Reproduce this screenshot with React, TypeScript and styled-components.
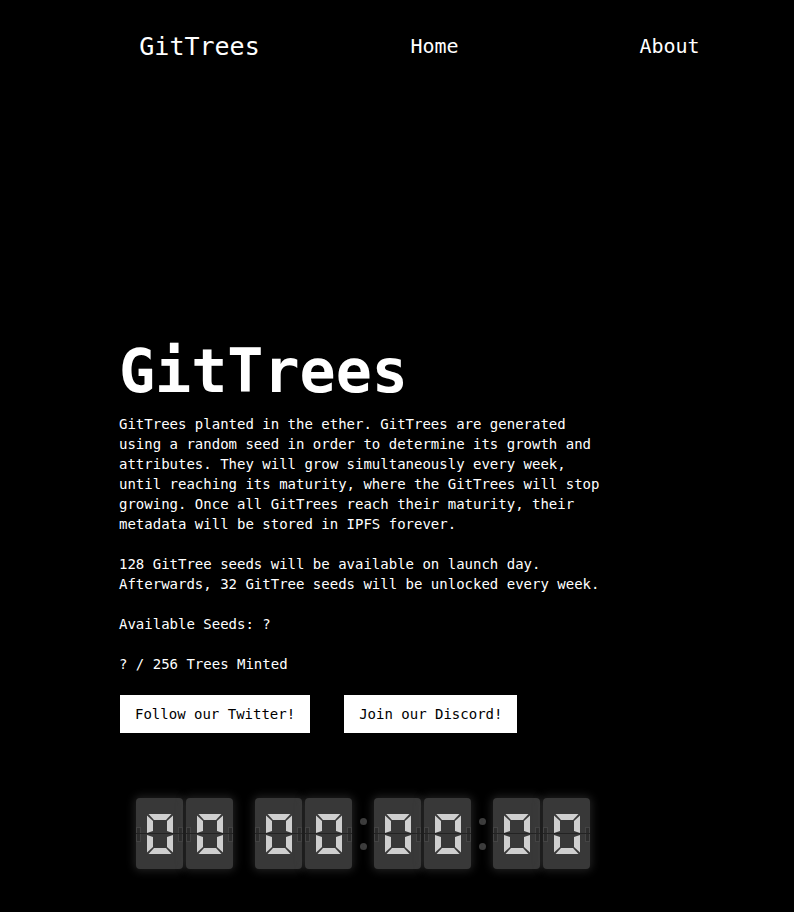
import React from "react";
import styled, { createGlobalStyle } from "styled-components";

const Global = createGlobalStyle`
  html, body { margin: 0; padding: 0; background: #000; }
  body { font-family: "DejaVu Sans Mono", "Liberation Mono", monospace; color: #fff; }
`;

const Page = styled.div`
  width: 794px;
  min-height: 912px;
  background: #000;
  overflow: hidden;
`;

const Header = styled.header`
  display: grid;
  grid-template-columns: repeat(3, 235px);
  padding-left: 82px;
  height: 92px;
  align-items: center;
`;

const NavItem = styled.a<{ $size: number }>`
  justify-self: center;
  color: #fff;
  text-decoration: none;
  font-size: ${(p) => p.$size}px;
  font-weight: 400;
  line-height: 1;
`;

const Hero = styled.main`
  padding: 244px 0 0 119px;
`;

const Title = styled.h1`
  margin: 0 0 8px;
  font-size: 60px;
  font-weight: 700;
  line-height: 70px;
`;

const Para = styled.p`
  margin: 0 0 20px;
  max-width: 490px;
  font-size: 14px;
  line-height: 20px;
`;

const Buttons = styled.div`
  display: flex;
  gap: 34px;
  margin-top: 21px;
  padding-left: 1px;
`;

const Button = styled.button`
  height: 38px;
  padding: 0 15px;
  border: none;
  border-radius: 0;
  background: #fff;
  color: #000;
  font-family: inherit;
  font-size: 14px;
  cursor: pointer;
`;

const Clock = styled.div`
  display: flex;
  align-items: center;
  margin: 65px 0 0 17px;
`;

const Pair = styled.div`
  display: flex;
  gap: 3px;
`;

const Sep = styled.div`
  width: 22px;
  height: 71px;
  display: flex;
  flex-direction: column;
  align-items: center;
  justify-content: center;
  gap: 18px;
`;

const Dot = styled.span`
  width: 7px;
  height: 7px;
  border-radius: 50%;
  background: #3d3d3d;
`;

const Card = styled.div`
  position: relative;
  width: 47px;
  height: 71px;
  border-radius: 4px;
  background: #383838;
  box-shadow: 0 0 8px 2px rgba(70, 70, 70, 0.45);
  display: flex;
  align-items: center;
  justify-content: center;
`;

const Hinge = styled.span<{ $side: "left" | "right" }>`
  position: absolute;
  top: 29px;
  ${(p) => (p.$side === "left" ? "left: 0;" : "right: 0;")}
  width: 3px;
  height: 13px;
  background: #2c2c2c;
  border: 1px solid #444;
`;

const Crease = styled.span`
  position: absolute;
  left: 0;
  right: 0;
  top: 35px;
  height: 1px;
  background: #232323;
`;

const Digit = () => (
  <svg width="26" height="40" viewBox="0 0 26 40">
    <g fill="#cfcfcf">
      <polygon points="1.5,0 24.5,0 19,6 7,6" />
      <polygon points="0,1.5 6,7 6,17 0,19" />
      <polygon points="26,1.5 20,7 20,17 26,19" />
      <polygon points="0,21 6,23 6,33 0,38.5" />
      <polygon points="26,21 20,23 20,33 26,38.5" />
      <polygon points="1.5,40 24.5,40 19,34 7,34" />
    </g>
  </svg>
);

const FlipCard = () => (
  <Card>
    <Hinge $side="left" />
    <Hinge $side="right" />
    <Digit />
    <Crease />
  </Card>
);

const DigitPair = () => (
  <Pair>
    <FlipCard />
    <FlipCard />
  </Pair>
);

export default function App() {
  return (
    <Page>
      <Global />
      <Header>
        <NavItem $size={25} href="#">GitTrees</NavItem>
        <NavItem $size={20} href="#">Home</NavItem>
        <NavItem $size={20} href="#">About</NavItem>
      </Header>
      <Hero>
        <Title>GitTrees</Title>
        <Para>
          GitTrees planted in the ether. GitTrees are generated using a random seed in order to
          determine its growth and attributes. They will grow simultaneously every week, until
          reaching its maturity, where the GitTrees will stop growing. Once all GitTrees reach
          their maturity, their metadata will be stored in IPFS forever.
        </Para>
        <Para>
          128 GitTree seeds will be available on launch day. Afterwards, 32 GitTree seeds will be
          unlocked every week.
        </Para>
        <Para>Available Seeds: ?</Para>
        <Para>? / 256 Trees Minted</Para>
        <Buttons>
          <Button>Follow our Twitter!</Button>
          <Button>Join our Discord!</Button>
        </Buttons>
        <Clock>
          <DigitPair />
          <Sep />
          <DigitPair />
          <Sep>
            <Dot />
            <Dot />
          </Sep>
          <DigitPair />
          <Sep>
            <Dot />
            <Dot />
          </Sep>
          <DigitPair />
        </Clock>
      </Hero>
    </Page>
  );
}
